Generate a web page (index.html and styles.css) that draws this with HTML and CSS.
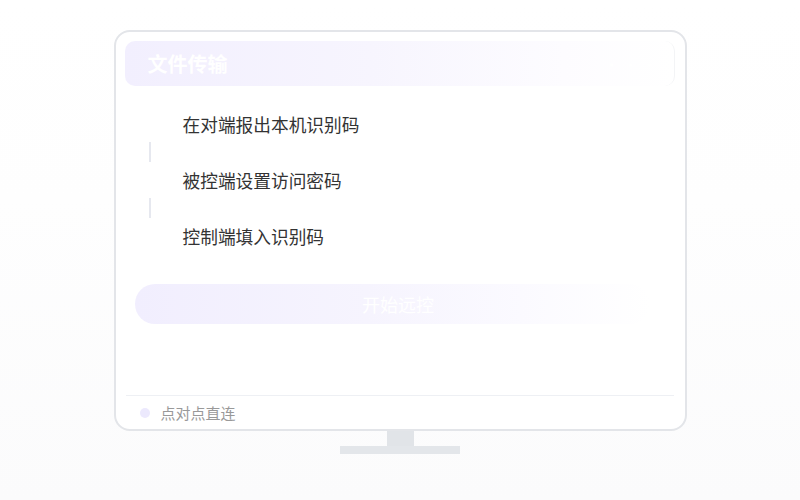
FILE: index.html
```html
<!DOCTYPE html>
<html lang="zh">
<head>
<meta charset="utf-8">
<link rel="stylesheet" href="styles.css">
</head>
<body>
<div class="stage">
  <div class="monitor">
    <div class="header">
      <span class="title">文件传输</span>
      <span class="more">···</span>
    </div>
    <div class="steps">
      <div class="step">在对端报出本机识别码</div>
      <div class="link"></div>
      <div class="step">被控端设置访问密码</div>
      <div class="link"></div>
      <div class="step">控制端填入识别码</div>
    </div>
    <div class="start">开始远控</div>
    <div class="footer">
      <span class="dot"></span>
      <span class="ftext">点对点直连</span>
    </div>
  </div>
  <div class="neck"></div>
  <div class="base"></div>
</div>
</body>
</html>
```
FILE: styles.css
```css
html, body {
  margin: 0;
  padding: 0;
  background: linear-gradient(180deg, #ffffff 0%, #fefefe 40%, #fbfbfc 100%);
  font-family: "Noto Sans CJK SC", "Noto Sans", sans-serif;
}
.stage {
  width: 800px;
  height: 500px;
  display: flex;
  flex-direction: column;
  align-items: center;
  padding-top: 30px;
  box-sizing: border-box;
}
.monitor {
  width: 573px;
  height: 401px;
  box-sizing: border-box;
  border: 2px solid #e3e5e9;
  border-radius: 16px;
  background: #ffffff;
  padding: 9px 10px 0 9px;
  display: flex;
  flex-direction: column;
}
.header {
  height: 45px;
  border-radius: 10px;
  background: linear-gradient(90deg, #f2effe 0%, #f7f5fe 45%, #fdfcff 80%, #ffffff 100%);
  display: flex;
  align-items: center;
  justify-content: space-between;
  padding: 0 14px 0 23px;
  border-right: 1px solid #f3f4f6;
}
.title {
  color: #ffffff;
  font-size: 20px;
  font-weight: 700;
  line-height: 24px;
}
.more {
  color: #ffffff;
  font-size: 18px;
  letter-spacing: 1px;
}
.steps {
  display: flex;
  flex-direction: column;
  margin-top: 26px;
}
.step {
  font-size: 17.7px;
  line-height: 24px;
  color: #333333;
  padding-left: 58px;
}
.link {
  width: 2px;
  height: 20px;
  background: #e6e8ef;
  margin: 6px 0 6px 24px;
}
.start {
  margin: 36px 0 0 10px;
  width: 515px;
  height: 40px;
  border-radius: 20px;
  background: linear-gradient(90deg, #f1eefe 0%, #f6f4fe 45%, #fbfaff 75%, #ffffff 100%);
  color: #ffffff;
  font-size: 18px;
  line-height: 40px;
  text-align: center;
  text-indent: 12px;
}
.footer {
  margin-top: auto;
  border-top: 1px solid #eef0f4;
  height: 33px;
  display: flex;
  align-items: center;
  padding-left: 14px;
  margin-right: 1px;
  margin-left: 1px;
}
.dot {
  width: 10px;
  height: 10px;
  border-radius: 50%;
  background: #ece9fd;
  margin-right: 11px;
}
.ftext {
  font-size: 15px;
  color: #999999;
}
.neck {
  width: 27px;
  height: 15px;
  background: #e1e4e8;
}
.base {
  width: 120px;
  height: 8px;
  background: #e3e6ea;
}
```
